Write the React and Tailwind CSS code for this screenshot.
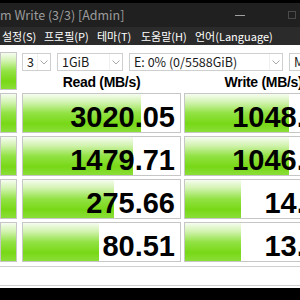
import React from 'react'

// bar widths in px, log scale like CrystalDiskMark
const ROWS = [
  { read: '3020.05', readBar: 118, write: '1048.87', writeBar: 104 },
  { read: '1479.71', readBar: 110, write: '1046.52', writeBar: 104 },
  { read: '275.66', readBar: 91, write: '14.31', writeBar: 56 },
  { read: '80.51', readBar: 76, write: '13.92', writeBar: 56 },
]

const GREEN = 'bg-[linear-gradient(to_bottom,#f6fcf0_0%,#d2f3b0_22%,#92e244_50%,#78d816_78%,#8ade38_100%)]'

function Chevron() {
  return (
    <svg width="8" height="5" viewBox="0 0 8 5" className="shrink-0">
      <polyline points="0.5,0.5 4,4 7.5,0.5" fill="none" stroke="#a8a8a8" strokeWidth="1" />
    </svg>
  )
}

function Combo({ value, width }) {
  return (
    <div className={`flex h-[18px] shrink-0 items-center border border-[#cfcfcf] bg-white ${width}`}>
      <span className="flex-1 whitespace-nowrap pl-[4px] text-[12.5px] leading-[16px] text-[#1a1a1a]">{value}</span>
      <div className="flex h-full w-[13px] shrink-0 items-center justify-center border-l border-[#f0f0f0]">
        <Chevron />
      </div>
    </div>
  )
}

function Cell({ value, bar }) {
  return (
    <div className="relative flex h-full w-[159px] shrink-0 items-end justify-end overflow-hidden border border-[#c6c6c6] bg-white pr-[5px]">
      <div className={`absolute inset-y-0 left-0 ${GREEN}`} style={{ width: bar }} />
      <span className="relative font-['Liberation_Sans',Arial,sans-serif] text-[29px] font-bold leading-[30px] text-black">{value}</span>
    </div>
  )
}

export default function App() {
  return (
    <div className="flex h-[300px] w-[300px] flex-col overflow-hidden bg-black font-['Noto_Sans_CJK_KR','Noto_Sans',sans-serif]">
      <div className="h-[3px] shrink-0 bg-black" />

      {/* title bar */}
      <div className="flex h-[24px] shrink-0 items-center bg-[#202020]">
        <span className="whitespace-nowrap text-[12.5px] text-[#9c9c9c]">m Write (3/3) [Admin]</span>
        <div className="ml-auto mr-[43px] h-px w-[10px] bg-[#a0a0a0]" />
        <div className="mr-[4px] h-[8px] w-[8px] border border-[#4a4a4a]" />
      </div>

      {/* menu bar */}
      <div className="flex h-[18px] shrink-0 items-center bg-[#2b2b2b] pl-[2px] text-[11px] leading-[14px] text-white whitespace-nowrap">
        <span className="w-[42px]">설정(S)</span>
        <span className="w-[53px]">프로필(P)</span>
        <span className="w-[44px]">테마(T)</span>
        <span className="w-[54px]">도움말(H)</span>
        <span>언어(Language)</span>
      </div>

      {/* main */}
      <div className="flex h-[243px] shrink-0 flex-col bg-white pt-[7px]">
        <div className="flex h-[41px] shrink-0">
          <div className={`h-[38px] w-[17px] shrink-0 border border-[#c6c6c6] ${GREEN}`} />
          <div className="ml-[5px] flex flex-col">
            <div className="mt-[1px] flex gap-[6px] whitespace-nowrap">
              <Combo value="3" width="w-[29px]" />
              <Combo value="1GiB" width="w-[66px]" />
              <Combo value="E: 0% (0/5588GiB)" width="w-[154px]" />
              <Combo value="M" width="w-[40px]" />
            </div>
            <div className="flex h-[22px] items-center gap-[3px] font-['Liberation_Sans',Arial,sans-serif] text-[14px] font-bold tracking-[-0.3px] text-black whitespace-nowrap">
              <div className="w-[159px] shrink-0 pt-[1px] text-center">Read (MB/s)</div>
              <div className="w-[159px] shrink-0 pt-[1px] text-center">Write (MB/s)</div>
            </div>
          </div>
        </div>

        <div className="flex flex-col gap-[3px]">
          {ROWS.map((r) => (
            <div key={r.read} className="flex h-[40px] shrink-0">
              <div className={`h-full w-[17px] shrink-0 border border-[#c6c6c6] ${GREEN}`} />
              <div className="ml-[5px] flex gap-[3px]">
                <Cell value={r.read} bar={r.readBar} />
                <Cell value={r.write} bar={r.writeBar} />
              </div>
            </div>
          ))}
        </div>

        {/* comment box */}
        <div className="ml-[-2px] mt-[4px] h-[20px] w-[310px] shrink-0 border border-[#cfcfcf] bg-white" />
      </div>
    </div>
  )
}
